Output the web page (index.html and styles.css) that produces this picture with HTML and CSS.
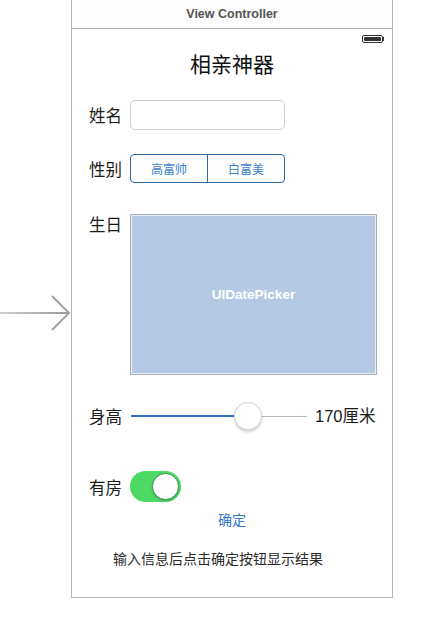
FILE: index.html
```html
<!DOCTYPE html>
<html lang="zh-CN">
<head>
<meta charset="utf-8">
<title>View Controller</title>
<link rel="stylesheet" href="styles.css">
</head>
<body>
<div class="canvas">
  <div class="entry">
    <svg class="entry-arrow" width="71" height="40" viewBox="0 0 71 40">
      <defs>
        <linearGradient id="fade" gradientUnits="userSpaceOnUse" x1="0" y1="20" x2="69" y2="20">
          <stop offset="0" stop-color="#cfcfcf"/>
          <stop offset="1" stop-color="#9a9a9a"/>
        </linearGradient>
      </defs>
      <rect x="0" y="19" width="69" height="2" fill="url(#fade)"/>
      <polyline points="52,3 69,20 52,37" fill="none" stroke="#a2a2a2" stroke-width="2"/>
    </svg>
  </div>
  <div class="scene">
    <div class="scene-header">View Controller</div>
    <div class="status">
      <div class="battery"><div class="battery-level"></div></div>
      <div class="battery-nub"></div>
    </div>
    <div class="title">相亲神器</div>

    <div class="row row-name">
      <div class="label">姓名</div>
      <div class="textfield"></div>
    </div>

    <div class="row row-gender">
      <div class="label">性别</div>
      <div class="segmented">
        <div class="segment">高富帅</div>
        <div class="segment">白富美</div>
      </div>
    </div>

    <div class="row row-birthday">
      <div class="label">生日</div>
      <div class="datepicker">UIDatePicker</div>
    </div>

    <div class="row row-height">
      <div class="label">身高</div>
      <div class="slider">
        <div class="slider-fill" style="width: 66.5%"></div>
        <div class="slider-thumb" style="left: 66.5%"></div>
      </div>
      <div class="value">170厘米</div>
    </div>

    <div class="row row-house">
      <div class="label">有房</div>
      <div class="switch"><div class="switch-thumb"></div></div>
    </div>

    <div class="confirm">确定</div>
    <div class="hint">输入信息后点击确定按钮显示结果</div>
  </div>
</div>
</body>
</html>
```

FILE: styles.css
```css
html, body {
  margin: 0;
  padding: 0;
  background: #ffffff;
}

body {
  font-family: "Liberation Sans", "Noto Sans CJK SC", sans-serif;
  color: #1a1a1a;
}

.canvas {
  display: flex;
  align-items: flex-start;
}

.entry {
  width: 71px;
  flex: none;
  padding-top: 293px;
}

.entry-arrow {
  display: block;
}

.scene {
  width: 322px;
  height: 598px;
  box-sizing: border-box;
  border: 1px solid #b4b4b4;
  border-top: none;
  display: flex;
  flex-direction: column;
}

.scene-header {
  height: 28px;
  border-bottom: 1px solid #b4b4b4;
  display: flex;
  align-items: center;
  justify-content: center;
  font-family: "Liberation Sans", sans-serif;
  font-weight: bold;
  font-size: 12.5px;
  color: #555555;
  background: #fdfdfd;
}

.status {
  height: 19px;
  display: flex;
  justify-content: flex-end;
  align-items: flex-start;
  padding-right: 8px;
  padding-top: 6px;
  box-sizing: border-box;
}

.battery {
  width: 21px;
  height: 8px;
  box-sizing: border-box;
  border: 1px solid #333333;
  border-radius: 2px;
  padding: 1px;
}

.battery-level {
  width: 100%;
  height: 100%;
  background: #333333;
  border-radius: 1px;
}

.battery-nub {
  width: 1.5px;
  height: 4px;
  margin-top: 2px;
  background: #333333;
}

.title {
  height: 30px;
  line-height: 30px;
  text-align: center;
  font-family: "Noto Sans CJK SC", sans-serif;
  font-size: 21px;
  color: #111111;
}

.row {
  display: flex;
  align-items: center;
  padding-left: 17px;
}

.label {
  width: 41px;
  flex: none;
  font-family: "Noto Sans CJK SC", sans-serif;
  font-size: 16.5px;
  line-height: 20px;
  color: #1a1a1a;
}

.row-name {
  margin-top: 22px;
  height: 30px;
}

.textfield {
  width: 155px;
  height: 30px;
  box-sizing: border-box;
  border: 1px solid #cfcfcf;
  border-radius: 5px;
  background: #ffffff;
}

.row-gender {
  margin-top: 24px;
  height: 29px;
}

.segmented {
  width: 155px;
  height: 29px;
  box-sizing: border-box;
  border: 1px solid #2d6aa8;
  border-radius: 4px;
  display: flex;
}

.segment {
  flex: 1;
  display: flex;
  align-items: center;
  justify-content: center;
  font-family: "Noto Sans CJK SC", sans-serif;
  font-size: 12px;
  color: #3b82cc;
}

.segment + .segment {
  border-left: 1px solid #2d6aa8;
}

.row-birthday {
  margin-top: 31px;
  align-items: flex-start;
}

.datepicker {
  width: 247px;
  height: 161px;
  box-sizing: border-box;
  border: 1px solid #a9b0b8;
  box-shadow: inset 0 0 0 1px #e8eef6;
  background: #b5c9e4;
  display: flex;
  align-items: center;
  justify-content: center;
  font-family: "Liberation Sans", sans-serif;
  font-weight: bold;
  font-size: 13.5px;
  color: #ffffff;
}

.row-height {
  margin-top: 26px;
  height: 30px;
}

.slider {
  position: relative;
  width: 176px;
  height: 30px;
  margin-left: 1px;
  display: flex;
  align-items: center;
  background: linear-gradient(#b8b8b8, #b8b8b8) no-repeat left center / 100% 1px;
}

.slider-fill {
  height: 2px;
  background: #2f6fc6;
}

.slider-thumb {
  position: absolute;
  top: 1px;
  width: 28px;
  height: 28px;
  margin-left: -14px;
  box-sizing: border-box;
  border-radius: 50%;
  background: #ffffff;
  border: 1px solid #d4d4d4;
  box-shadow: 0 2px 3px rgba(0, 0, 0, 0.18);
}

.value {
  margin-left: 8px;
  font-family: "Liberation Sans", "Noto Sans CJK SC", sans-serif;
  font-size: 16.5px;
  line-height: 20px;
  color: #1a1a1a;
}

.row-house {
  margin-top: 40px;
  height: 31px;
}

.switch {
  width: 51px;
  height: 31px;
  box-sizing: border-box;
  border-radius: 16px;
  background: #4cd964;
  padding: 2px;
  display: flex;
  justify-content: flex-end;
}

.switch-thumb {
  width: 27px;
  height: 27px;
  box-sizing: border-box;
  border-radius: 50%;
  background: #ffffff;
  border: 1px solid #3e8f4c;
  box-shadow: 0 1px 2px rgba(0, 0, 0, 0.2);
}

.confirm {
  margin-top: 7px;
  height: 20px;
  line-height: 20px;
  text-align: center;
  font-family: "Noto Sans CJK SC", sans-serif;
  font-size: 14px;
  color: #2f76c4;
}

.hint {
  margin-top: 19px;
  padding-left: 41px;
  height: 20px;
  line-height: 20px;
  font-family: "Noto Sans CJK SC", sans-serif;
  font-size: 14px;
  color: #2a2a2a;
}
```
